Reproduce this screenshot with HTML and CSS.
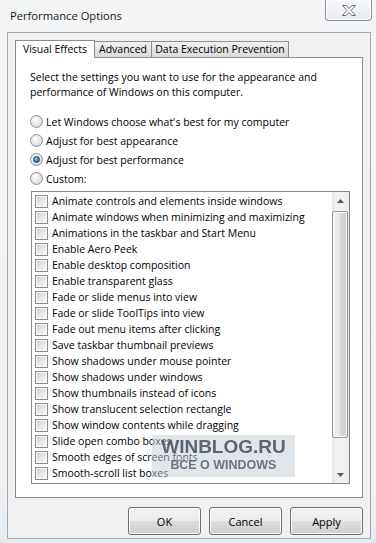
FILE: index.html
```html
<!DOCTYPE html>
<html>
  <head>
    <meta charset="UTF-8">
    <meta name="viewport" content="width=device-width, initial-scale=1">
    <title>Performance Options</title>
    <link rel="stylesheet" href="styles.css">
  </head>
  <body>
    <div class="window">
      <div class="titlebar">
        <span class="title">Performance Options</span>
        <div class="close-btn">
          <svg width="14" height="11" viewBox="0 0 14 11">
            <polygon points="0.5,0.5 4,0.5 7,3.4 10,0.5 13.5,0.5 9,5.5 13.5,10.5 10,10.5 7,7.6 4,10.5 0.5,10.5 5,5.5" fill="#fdfdfd" stroke="#6b7178" stroke-width="1" stroke-linejoin="round"/>
          </svg>
        </div>
      </div>

      <div class="client">
        <div class="tabs">
          <div class="tab selected">Visual Effects</div>
          <div class="tab tab-adv">Advanced</div>
          <div class="tab tab-dep">Data Execution Prevention</div>
        </div>

        <div class="panel">
          <p class="intro">Select the settings you want to use for the appearance and<br>performance of Windows on this computer.</p>

          <div class="radios">
            <div class="radio-row"><span class="radio"></span>Let Windows choose what's best for my computer</div>
            <div class="radio-row"><span class="radio"></span>Adjust for best appearance</div>
            <div class="radio-row"><span class="radio checked"></span>Adjust for best performance</div>
            <div class="radio-row"><span class="radio"></span>Custom:</div>
          </div>

          <div class="listbox">
            <div class="items">
              <div class="item"><span class="check"></span>Animate controls and elements inside windows</div>
              <div class="item"><span class="check"></span>Animate windows when minimizing and maximizing</div>
              <div class="item"><span class="check"></span>Animations in the taskbar and Start Menu</div>
              <div class="item"><span class="check"></span>Enable Aero Peek</div>
              <div class="item"><span class="check"></span>Enable desktop composition</div>
              <div class="item"><span class="check"></span>Enable transparent glass</div>
              <div class="item"><span class="check"></span>Fade or slide menus into view</div>
              <div class="item"><span class="check"></span>Fade or slide ToolTips into view</div>
              <div class="item"><span class="check"></span>Fade out menu items after clicking</div>
              <div class="item"><span class="check"></span>Save taskbar thumbnail previews</div>
              <div class="item"><span class="check"></span>Show shadows under mouse pointer</div>
              <div class="item"><span class="check"></span>Show shadows under windows</div>
              <div class="item"><span class="check"></span>Show thumbnails instead of icons</div>
              <div class="item"><span class="check"></span>Show translucent selection rectangle</div>
              <div class="item"><span class="check"></span>Show window contents while dragging</div>
              <div class="item"><span class="check"></span>Slide open combo boxes</div>
              <div class="item"><span class="check"></span>Smooth edges of screen fonts</div>
              <div class="item"><span class="check"></span>Smooth-scroll list boxes</div>
            </div>
            <div class="scrollbar">
              <div class="sb-btn">
                <svg width="7" height="4" viewBox="0 0 7 4"><polygon points="0,4 3.5,0 7,4" fill="#4d5b6b"/></svg>
              </div>
              <div class="sb-track">
                <div class="sb-thumb"></div>
              </div>
              <div class="sb-btn">
                <svg width="7" height="4" viewBox="0 0 7 4"><polygon points="0,0 7,0 3.5,4" fill="#4d5b6b"/></svg>
              </div>
            </div>
          </div>

          <div class="watermark">
            <div class="wm-big">WINBLOG.RU</div>
            <div class="wm-small">ВСЕ О WINDOWS</div>
          </div>
        </div>

        <div class="buttons">
          <div class="btn">OK</div>
          <div class="btn">Cancel</div>
          <div class="btn">Apply</div>
        </div>
      </div>
    </div>
  </body>
</html>
```

FILE: styles.css
```css
body {
  margin: 0;
  font-family: "Open Sans", "Noto Sans", sans-serif;
  font-size: 10.5px;
  color: #000;
  background: #dde4ea;
}

.window {
  width: 376px;
  height: 543px;
  box-sizing: border-box;
  background: linear-gradient(#f3f4f5, #eef0f2 90%, #e3ebf1);
  border-radius: 0 0 6px 6px;
  overflow: hidden;
}

.titlebar {
  height: 32px;
  display: flex;
  align-items: flex-start;
}
.title {
  padding: 8px 0 0 10px;
  font-size: 11.2px;
  line-height: 15px;
  color: #1a1a1a;
}
.close-btn {
  margin-left: auto;
  margin-right: 4px;
  width: 47px;
  height: 21px;
  box-sizing: border-box;
  border: 1px solid #8d9299;
  border-top: none;
  border-radius: 0 0 4px 4px;
  background: linear-gradient(#f7f8f9, #e6e9ec);
  box-shadow: inset 0 0 0 1px #fbfcfd;
  display: flex;
  align-items: center;
  justify-content: center;
}

.client {
  margin-left: 7px;
  width: 364px;
  height: 507px;
  box-sizing: border-box;
  border: 1px solid #a3a7ac;
  background: #f0f0f0;
  padding: 7px 7px 0 7px;
}

/* tab strip */
.tabs {
  height: 18px;
  display: flex;
  align-items: flex-end;
  margin-bottom: -1px;
  position: relative;
  z-index: 1;
}
.tab {
  height: 16px;
  box-sizing: border-box;
  margin-bottom: 1px;
  border: 1px solid #898c95;
  border-bottom: none;
  background: linear-gradient(#f3f3f3, #e4e4e4 50%, #dadada);
  line-height: 15px;
  text-align: center;
  white-space: nowrap;
}
.tab.selected {
  height: 18px;
  margin-bottom: 0;
  width: 80px;
  background: #fff;
  line-height: 16px;
}
.tab-adv {
  width: 58px;
  margin-left: -1px;
}
.tab-dep {
  width: 138px;
  margin-left: -1px;
}

.panel {
  position: relative;
  height: 441px;
  box-sizing: border-box;
  border: 1px solid #898c95;
  background: #fff;
  padding: 12px 0 0 14px;
}
.intro {
  margin: 0;
  line-height: 15px;
}

.radios {
  margin-top: 12px;
}
.radio-row {
  height: 19px;
  display: flex;
  align-items: center;
}
.radio {
  width: 13px;
  height: 13px;
  box-sizing: border-box;
  border: 1px solid #8e8f8f;
  border-radius: 50%;
  background: radial-gradient(circle at 40% 35%, #ffffff, #e2e2e2 60%, #cfcfcf);
  margin-right: 3px;
  display: flex;
  align-items: center;
  justify-content: center;
}
.radio.checked::after {
  content: "";
  width: 5px;
  height: 5px;
  border-radius: 50%;
  border: 1px solid #1c3f66;
  background: radial-gradient(circle at 40% 40%, #8fd0f2, #2a6aa0 70%);
}

.listbox {
  margin: 3px 0 0 1px;
  width: 319px;
  height: 293px;
  box-sizing: border-box;
  border: 1px solid #828790;
  display: flex;
}
.items {
  flex: 1;
  overflow: hidden;
  padding-top: 1px;
}
.item {
  height: 16px;
  display: flex;
  align-items: center;
  white-space: nowrap;
}
.check {
  width: 13px;
  height: 13px;
  box-sizing: border-box;
  margin: 0 4px 0 3px;
  border: 1px solid #8e8f8f;
  background: linear-gradient(135deg, #cfcfcf, #f7f7f7 85%);
  box-shadow: inset 0 0 0 1px #f4f4f4;
}

.scrollbar {
  width: 17px;
  display: flex;
  flex-direction: column;
  background: linear-gradient(90deg, #e4e4e4, #f1f1f1 20%, #f1f1f1 80%, #e8e8e8);
}
.sb-btn {
  height: 17px;
  display: flex;
  align-items: center;
  justify-content: center;
}
.sb-track {
  flex: 1;
  padding-top: 2px;
}
.sb-thumb {
  height: 227px;
  margin-right: 1px;
  box-sizing: border-box;
  border: 1px solid #959595;
  border-radius: 2px;
  background: linear-gradient(90deg, #f4f4f4, #e6e6e6 45%, #d6d6d6 55%, #cfcfcf);
  box-shadow: inset 0 0 0 1px #fafafa;
}

/* site watermark laid over the list */
.watermark {
  position: absolute;
  left: 136px;
  top: 377px;
  width: 143px;
  height: 42px;
  background: rgba(196, 205, 216, 0.5);
  font-family: "Liberation Sans", Arial, sans-serif;
  font-weight: bold;
  color: rgba(70, 80, 92, 0.85);
  text-align: center;
  filter: blur(0.6px);
}
.wm-big {
  font-size: 19px;
  line-height: 20px;
  margin-top: 2px;
}
.wm-small {
  font-size: 12.5px;
  line-height: 16px;
  color: rgba(80, 90, 102, 0.8);
}

.buttons {
  margin-top: 9px;
  display: flex;
  justify-content: flex-end;
  gap: 8px;
}
.btn {
  width: 73px;
  height: 28px;
  box-sizing: border-box;
  border: 1px solid #707070;
  border-radius: 3px;
  background: linear-gradient(#f2f2f2, #ebebeb 50%, #dddddd 50%, #cfcfcf);
  box-shadow: inset 0 0 0 1px #fbfbfb;
  display: flex;
  align-items: center;
  justify-content: center;
  font-size: 11px;
}
```
